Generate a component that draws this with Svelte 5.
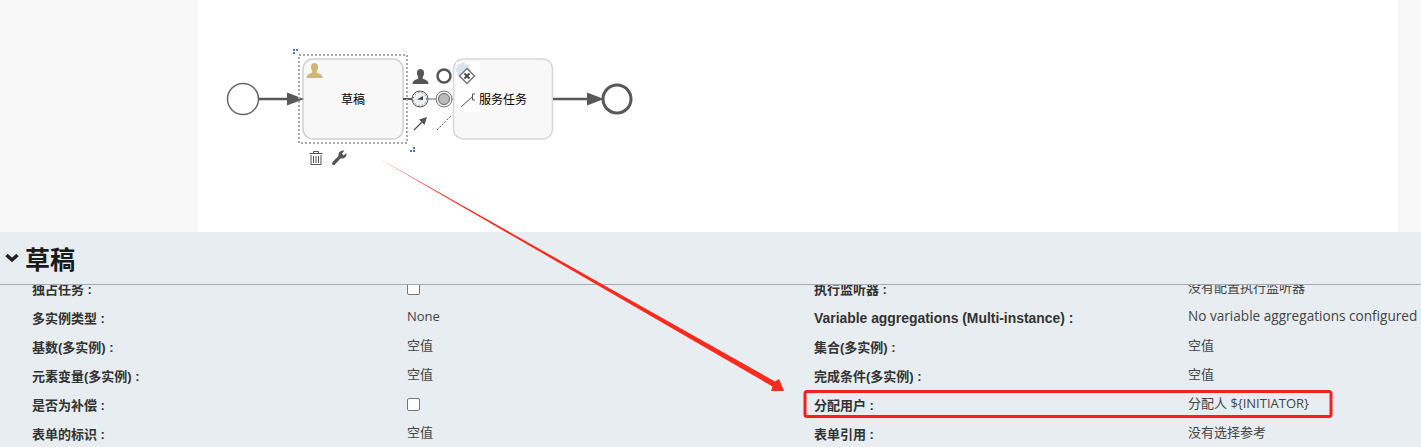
<script>
	const rows = [
		[
			{ label: '独占任务 :', check: true },
			{ label: '多实例类型 :', value: 'None' },
			{ label: '基数(多实例) :', value: '空值' },
			{ label: '元素变量(多实例) :', value: '空值' },
			{ label: '是否为补偿 :', check: true },
			{ label: '表单的标识 :', value: '空值' }
		],
		[
			{ label: '执行监听器 :', value: '没有配置执行监听器' },
			{ label: 'Variable aggregations (Multi-instance) :', value: 'No variable aggregations configured', wide: true },
			{ label: '集合(多实例) :', value: '空值' },
			{ label: '完成条件(多实例) :', value: '空值' },
			{ label: '分配用户 :', value: '分配人 ${INITIATOR}' },
			{ label: '表单引用 :', value: '没有选择参考' }
		]
	];
	const person = 'M0 15c0-3 2-4 5-5 1-.5 1-1.500 .5-2.500C4.500 6 4.500 4.500 4.500 3.500 4.500 1.500 6 0 8 0s3.500 1.500 3.500 3.500c0 1 0 2.500-1 4-.5 1-.5 2 .5 2.500 3 1 5 2 5 5z';
	const gear = [0, 45, 90, 135];
</script>

<div class="page">
	<div class="canvas">
		<svg class="diagram" width="1421" height="232" viewBox="0 0 1421 232">
			<!-- tasks -->
			<rect x="303" y="59" width="100" height="80" rx="10" fill="#f8f8f8" stroke="#d0d0d0" stroke-width="1.500" />
			<rect x="453.500" y="59" width="99" height="80" rx="10" fill="#f8f8f8" stroke="#d8d8d8" stroke-width="1.500" />
			<text x="353" y="104" class="task" text-anchor="middle">草稿</text>

			<!-- flow lines -->
			<circle cx="243" cy="99" r="15.500" fill="#fff" stroke="#666" stroke-width="1.500" />
			<path d="M258.500 99H290" stroke="#585858" stroke-width="2.500" />
			<path d="M287 92.500l17 6.500-17 6.500z" fill="#585858" />
			<path d="M403 99H412" stroke="#585858" stroke-width="2" />
			<path d="M412 99H453" stroke="#b4b4b4" stroke-width="2" />

			<!-- selection -->
			<rect x="299" y="55" width="108" height="88" fill="none" stroke="#aaa" stroke-width="2" stroke-dasharray="2 2" />
			<path d="M293 49h2v2h-2zM296 49h2v2h-2zM293 52h2v2h-2zM413 147h2v2h-2zM410 150h2v2h-2zM413 150h2v2h-2z" fill="#4a7ab5" />
			<path d={person} transform="translate(306.500 63)" fill="#d1b574" />

			<!-- context pad -->
			<rect x="456" y="62" width="24" height="50" fill="#fff" opacity="0.85" />
			<path d={person} transform="translate(412.500 69)" fill="#555" />
			<circle cx="444" cy="76" r="6.500" fill="none" stroke="#555" stroke-width="2.500" />
			<circle cx="420" cy="99" r="8" fill="#eef0f1" stroke="#555" stroke-width="1" />
			<circle cx="420" cy="99" r="6.500" fill="none" stroke="#555" stroke-width="1" stroke-dasharray="1 2.500" />
			<path d="M417 99.500l6-3.500v4z" fill="#444" />
			<circle cx="444" cy="99" r="8" fill="#eef0f1" stroke="#777" stroke-width="1" />
			<circle cx="444" cy="99" r="5.500" fill="#bbb" stroke="#666" stroke-width="1" />
			<path d="M414 130l10-10" stroke="#555" stroke-width="1.200" />
			<path d="M427 117l-8 2.500 5.500 5.500z" fill="#555" />
			<path d="M437 130l14-14" stroke="#555" stroke-width="1" stroke-dasharray="2 1.500" />

			{#each gear as a}
				<rect x="461" y="62.500" width="4" height="15" fill="#d6e4f0" transform="rotate({a} 463 70)" />
			{/each}
			<circle cx="463" cy="70" r="5.500" fill="#d6e4f0" />
			<path d="M467 68.500l7.500 7.500-7.500 7.500-7.500-7.500z" fill="#fafafa" stroke="#777" stroke-width="1.500" />
			<path d="M464.500 73.500l5 5M469.500 73.500l-5 5" stroke="#444" stroke-width="1.800" />
			<path d="M461 107l11-10" stroke="#555" stroke-width="1" />
			<path d="M475 94h-2.500v6h2.500" fill="none" stroke="#555" stroke-width="1" />
			<text x="503" y="104" class="task" text-anchor="middle">服务任务</text>

			<!-- end event -->
			<path d="M553 99H590" stroke="#585858" stroke-width="2.500" />
			<path d="M587 92.500l17 6.500-17 6.500z" fill="#585858" />
			<circle cx="617" cy="99" r="14" fill="#fff" stroke="#585858" stroke-width="3" />

			<!-- trash, wrench -->
			<path d="M309.500 153.500h13M313.500 153.500v-2h5v2M311 155v9.500h10V155M313.500 156v7M316 156v7M318.500 156v7" fill="none" stroke="#555" stroke-width="1" />
			<path d="M332.500 162l6-6c-.5-3 1.500-6 6-5.500l-2.500 3 1.500 2 3-2.500c.5 4-2.500 6-6 5.500l-6 6.500c-1.200 1-3.200-.8-2-3z" fill="#555" />
		</svg>
	</div>

	<section class="panel">
		<header>
			<svg width="14" height="10" viewBox="0 0 14 10"><path d="M1.500 2l5.500 5 5.500-5" fill="none" stroke="#222" stroke-width="3.500" /></svg>
			<h2>草稿</h2>
		</header>
		<div class="props">
			<div class="grid">
				{#each rows as col}
					<div class="col">
						{#each col as row}
							<div class="row">
								<span class="label" class:wide={row.wide}>{row.label}</span>
								{#if row.check}
									<span class="box"></span>
								{:else}
									<span class="value" class:wide={row.wide}>{row.value}</span>
								{/if}
							</div>
						{/each}
					</div>
				{/each}
			</div>
		</div>
	</section>

	<svg class="notes" width="1421" height="447" viewBox="0 0 1421 447">
		<path d="M378 158L775 381.500 779 379 784 391 771 391 772.500 386.500z" fill="#fb2a1c" />
		<rect x="805" y="391.500" width="526" height="25" rx="2" fill="none" stroke="#f5201a" stroke-width="3" />
	</svg>
</div>

<style>
	:global(body) {
		margin: 0;
		overflow: hidden;
	}
	.page {
		position: relative;
		width: 1421px;
		height: 447px;
		overflow: hidden;
		font-family: "Liberation Sans", "Noto Sans CJK SC", sans-serif;
		color: #333;
	}
	.canvas {
		height: 232px;
		background: linear-gradient(to right, #f8f8f8 198px, #fff 198px, #fff 1398px, #f8f8f8 1398px);
	}
	.diagram {
		display: block;
	}
	.task {
		font-family: "Liberation Sans", "Noto Sans CJK SC", sans-serif;
		font-size: 12px;
		fill: #000;
	}
	.panel {
		height: 215px;
		background: #e8edf1;
	}
	header {
		height: 53px;
		box-sizing: border-box;
		border-bottom: 1px solid #a4a9b8;
		padding-left: 5px;
		display: flex;
		align-items: center;
		gap: 6px;
	}
	h2 {
		margin: 0;
		font-size: 25px;
		font-weight: 700;
		color: #1a1a1a;
	}
	.props {
		height: 162px;
		overflow: hidden;
	}
	.grid {
		margin-top: -11px;
		display: flex;
	}
	.col {
		width: 814px;
		padding-left: 32px;
		box-sizing: border-box;
	}
	.col + .col {
		width: 607px;
		padding-left: 0;
	}
	.row {
		height: 29px;
		display: flex;
		align-items: center;
		font-size: 13px;
		white-space: nowrap;
	}
	.label {
		width: 375px;
		flex: none;
		font-weight: 700;
		color: #333;
	}
	.label.wide {
		font-size: 13.9px;
	}
	.col + .col .label {
		width: 374px;
	}
	.value {
		margin-top: -4px;
		color: #444;
		font-family: "Open Sans", "Noto Sans CJK SC", sans-serif;
		font-size: 13px;
	}
	.value.wide {
		font-size: 13.6px;
	}
	.box {
		width: 11px;
		height: 11px;
		margin-top: -1px;
		border: 1px solid #767676;
		border-radius: 2px;
		background: #fff;
	}
	.notes {
		position: absolute;
		left: 0;
		top: 0;
		pointer-events: none;
	}
</style>
